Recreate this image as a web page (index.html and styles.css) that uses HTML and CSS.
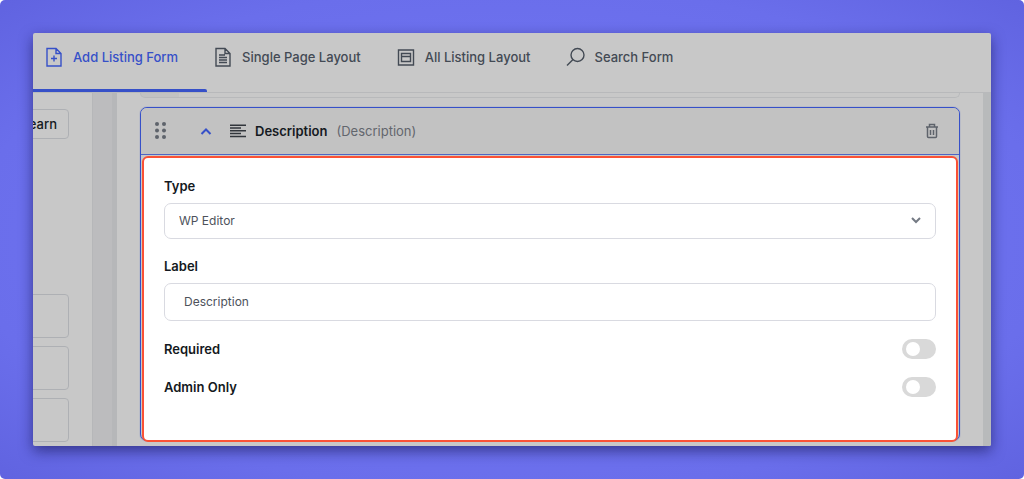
FILE: index.html
```html
<!DOCTYPE html>
<html lang="en">
<head>
    <meta charset="UTF-8">
    <meta name="viewport" content="width=device-width, initial-scale=1.0">
    <title>Listing Form Builder</title>
    <link rel="stylesheet" href="styles.css">
</head>
<body>
    <div class="backdrop">
        <div class="window">
            <nav class="tabs">
                <a href="#add" class="tab active">
                    <svg width="20" height="20" viewBox="0 0 20 20"><path d="M3 1.500h9l5 5v12.500H3zM12 1.500v5h5M10 8.500v6M7 11.500h6"/></svg>
                    Add Listing Form
                </a>
                <a href="#single" class="tab">
                    <svg width="20" height="20" viewBox="0 0 20 20"><path d="M3 1.500h9l5 5v12.500H3zM12 1.500v5h5M6 8h6M6 10.500h8M6 13h8M6 15.500h8"/></svg>
                    Single Page Layout
                </a>
                <a href="#all" class="tab">
                    <svg width="20" height="20" viewBox="0 0 20 20"><path d="M2.500 3h15v15h-15zM5.500 6.500h9v8h-9zM5.500 9.500h9"/></svg>
                    All Listing Layout
                </a>
                <a href="#search" class="tab">
                    <svg width="20" height="20" viewBox="0 0 20 20"><circle cx="12.500" cy="8" r="6.500"/><path d="M8 12.500L2 18.500"/></svg>
                    Search Form
                </a>
            </nav>

            <div class="content">
                <aside class="sidebar">
                    <button type="button" class="learn">earn</button>
                    <div class="slot"></div>
                    <div class="slot"></div>
                    <div class="slot"></div>
                </aside>
                <div class="gutter"></div>

                <main class="builder">
                    <div class="previous"></div>
                    <section class="card">
                        <header class="card-header">
                            <svg class="grip" width="12" height="18" viewBox="0 0 12 18"><circle cx="2" cy="2" r="2"/><circle cx="9" cy="2" r="2"/><circle cx="2" cy="8.500" r="2"/><circle cx="9" cy="8.500" r="2"/><circle cx="2" cy="15" r="2"/><circle cx="9" cy="15" r="2"/></svg>
                            <button type="button" class="icon-button toggle" aria-label="Collapse">
                                <svg width="12" height="12" viewBox="0 0 12 12"><path d="M1.500 9L6 4.500L10.500 9"/></svg>
                            </button>
                            <svg class="lines" width="16" height="14" viewBox="0 0 16 14"><path d="M0 1.200h16M0 4h11M0 6.800h16M0 9.600h11M0 12.400h16"/></svg>
                            <h2>Description</h2>
                            <span class="kind">(Description)</span>
                            <button type="button" class="icon-button trash" aria-label="Delete">
                                <svg width="14" height="16" viewBox="0 0 14 16"><path d="M1 4h12M4.500 4V1.500h5V4M2.500 4v9.500q0 1 1 1h7q1 0 1-1V4M5.500 7v5M8.500 7v5"/></svg>
                            </button>
                        </header>
                        <form class="panel">
                            <div class="field">
                                <label for="type">Type</label>
                                <div class="select">
                                    <select id="type">
                                        <option>WP Editor</option>
                                        <option>Textarea</option>
                                    </select>
                                    <svg width="10" height="8" viewBox="0 0 10 8"><path d="M1 2L5 6L9 2"/></svg>
                                </div>
                            </div>
                            <div class="field">
                                <label for="label">Label</label>
                                <input type="text" id="label" value="Description">
                            </div>
                            <div class="switches">
                                <div class="switch-row">
                                    <label for="required">Required</label>
                                    <input type="checkbox" id="required" class="switch">
                                </div>
                                <div class="switch-row">
                                    <label for="admin">Admin Only</label>
                                    <input type="checkbox" id="admin" class="switch">
                                </div>
                            </div>
                        </form>
                    </section>
                </main>
                <div class="edge"></div>
            </div>
        </div>
    </div>
</body>
</html>
```
FILE: styles.css
```css
* {
    box-sizing: border-box;
}

body {
    margin: 0;
    background-color: #fff;
    color: #141921;
    font-family: Inter, "Liberation Sans", sans-serif;
    font-size: 13px;
    line-height: 20px;
}

svg {
    display: block;
    flex: none;
    fill: none;
    stroke: currentColor;
}

.backdrop {
    display: flex;
    min-height: 100vh;
    padding: 33px;
    border-radius: 5px;
    background: radial-gradient(ellipse at center, #6f73f1 40%, #6a6eeb 75%, #6063e0 100%);
}

.window {
    flex: 1;
    min-width: 0;
    display: flex;
    flex-direction: column;
    overflow: hidden;
    border-radius: 2px;
    background-color: #c8c8c8;
    box-shadow: 0 5px 14px rgba(20, 20, 80, 0.6);
}

/* Tabs */
.tabs {
    display: flex;
    gap: 35px;
    padding-left: 11px;
    border-bottom: 1px solid #b8b9bb;
}

.tab {
    position: relative;
    display: flex;
    gap: 9px;
    align-items: center;
    padding: 14px 0 25px;
    color: #434a54;
    font-weight: 500;
    text-decoration: none;
    white-space: nowrap;
}

.tab svg {
    stroke-width: 1.4;
}

.tab.active {
    color: #3650c8;
}

.tab.active::after {
    content: "";
    position: absolute;
    left: -11px;
    right: -29px;
    bottom: 0;
    height: 3px;
    border-radius: 0 2px 0 0;
    background-color: #3650c8;
}

/* Columns */
.content {
    flex: 1;
    display: flex;
}

.sidebar {
    width: 59px;
    display: flex;
    flex-direction: column;
    align-items: flex-end;
    gap: 8px;
    padding: 16px 23px 0 0;
    overflow: hidden;
}

.learn {
    height: 30px;
    margin-bottom: 147px;
    padding: 0 11px 0 20px;
    border: 1px solid #aeb0b4;
    border-radius: 4px;
    background: none;
    color: #141921;
    font: inherit;
    font-weight: 500;
}

.slot {
    width: 80px;
    height: 44px;
    flex: none;
    border: 1px solid #aeb0b4;
    border-radius: 4px;
}

.gutter {
    width: 25px;
    border-left: 1px solid #b6b7b9;
    border-right: 5px solid #b6b7b9;
    background-color: #bcbcbe;
}

.edge {
    width: 8px;
    background-color: #b8babb;
}

.builder {
    flex: 1;
    min-width: 0;
    padding: 0 23px 5px;
}

.previous {
    height: 5px;
    margin-bottom: 9px;
    border: 1px solid #b8b9bb;
    border-top: none;
    border-radius: 0 0 5px 5px;
    background: linear-gradient(to right, #c2c2c2 38px, transparent 38px);
}

/* Card */
.card {
    padding-bottom: 1px;
    border: 1px solid #3650c8;
    border-radius: 7px;
    box-shadow: 0 0 1px #3650c8;
}

.card-header {
    display: flex;
    align-items: center;
    height: 47px;
    padding: 0 20px 0 14px;
    border-bottom: 1px solid #4e65c4;
    border-radius: 6px 6px 0 0;
    background-color: #c2c2c2;
}

.icon-button {
    padding: 0;
    border: none;
    background: none;
    cursor: pointer;
}

.grip {
    fill: #5e636b;
    stroke: none;
}

.toggle {
    margin: 0 18px 0 33px;
    color: #3650c8;
}

.toggle svg {
    stroke-width: 2;
}

.lines {
    margin-right: 9px;
    color: #32363c;
    stroke-width: 1.5;
}

.card-header h2 {
    margin: 0 9px 0 0;
    font-size: 13px;
    font-weight: 600;
}

.kind {
    color: #62666d;
}

.trash {
    margin-left: auto;
    color: #5e636b;
}

.trash svg {
    stroke-width: 1.5;
}

/* Settings panel */
.panel {
    margin: 1px 1px -3px;
    padding: 18px 20px 43px;
    border: 2px solid #fa5236;
    border-radius: 6px;
    background-color: #fff;
}

.field {
    margin-bottom: 17px;
}

label {
    display: block;
    font-weight: 600;
}

.field label {
    margin-bottom: 7px;
}

.select {
    position: relative;
}

.select select,
.field input {
    display: block;
    width: 100%;
    border: 1px solid #d9dae1;
    border-radius: 7px;
    background-color: #fff;
    color: #4d525b;
    font: inherit;
    font-size: 12px;
}

.select select {
    height: 36px;
    padding: 0 14px 1px;
    appearance: none;
}

.select svg {
    position: absolute;
    top: 13px;
    right: 15px;
    color: #747a84;
    stroke-width: 2;
    pointer-events: none;
}

.field input {
    height: 38px;
    padding: 0 19px 1px;
}

.switches {
    display: flex;
    flex-direction: column;
    gap: 18px;
    padding-top: 1px;
}

.switch-row {
    display: flex;
    align-items: center;
    justify-content: space-between;
}

.switch {
    appearance: none;
    width: 34px;
    height: 20px;
    margin: 0;
    padding: 3px 4px;
    border-radius: 10px;
    background-color: #d9d9d9;
    cursor: pointer;
}

.switch::before {
    content: "";
    display: block;
    width: 14px;
    height: 14px;
    border-radius: 50%;
    background-color: #fff;
}

.switch:checked {
    background-color: #3650c8;
}

.switch:checked::before {
    margin-left: auto;
}
```
